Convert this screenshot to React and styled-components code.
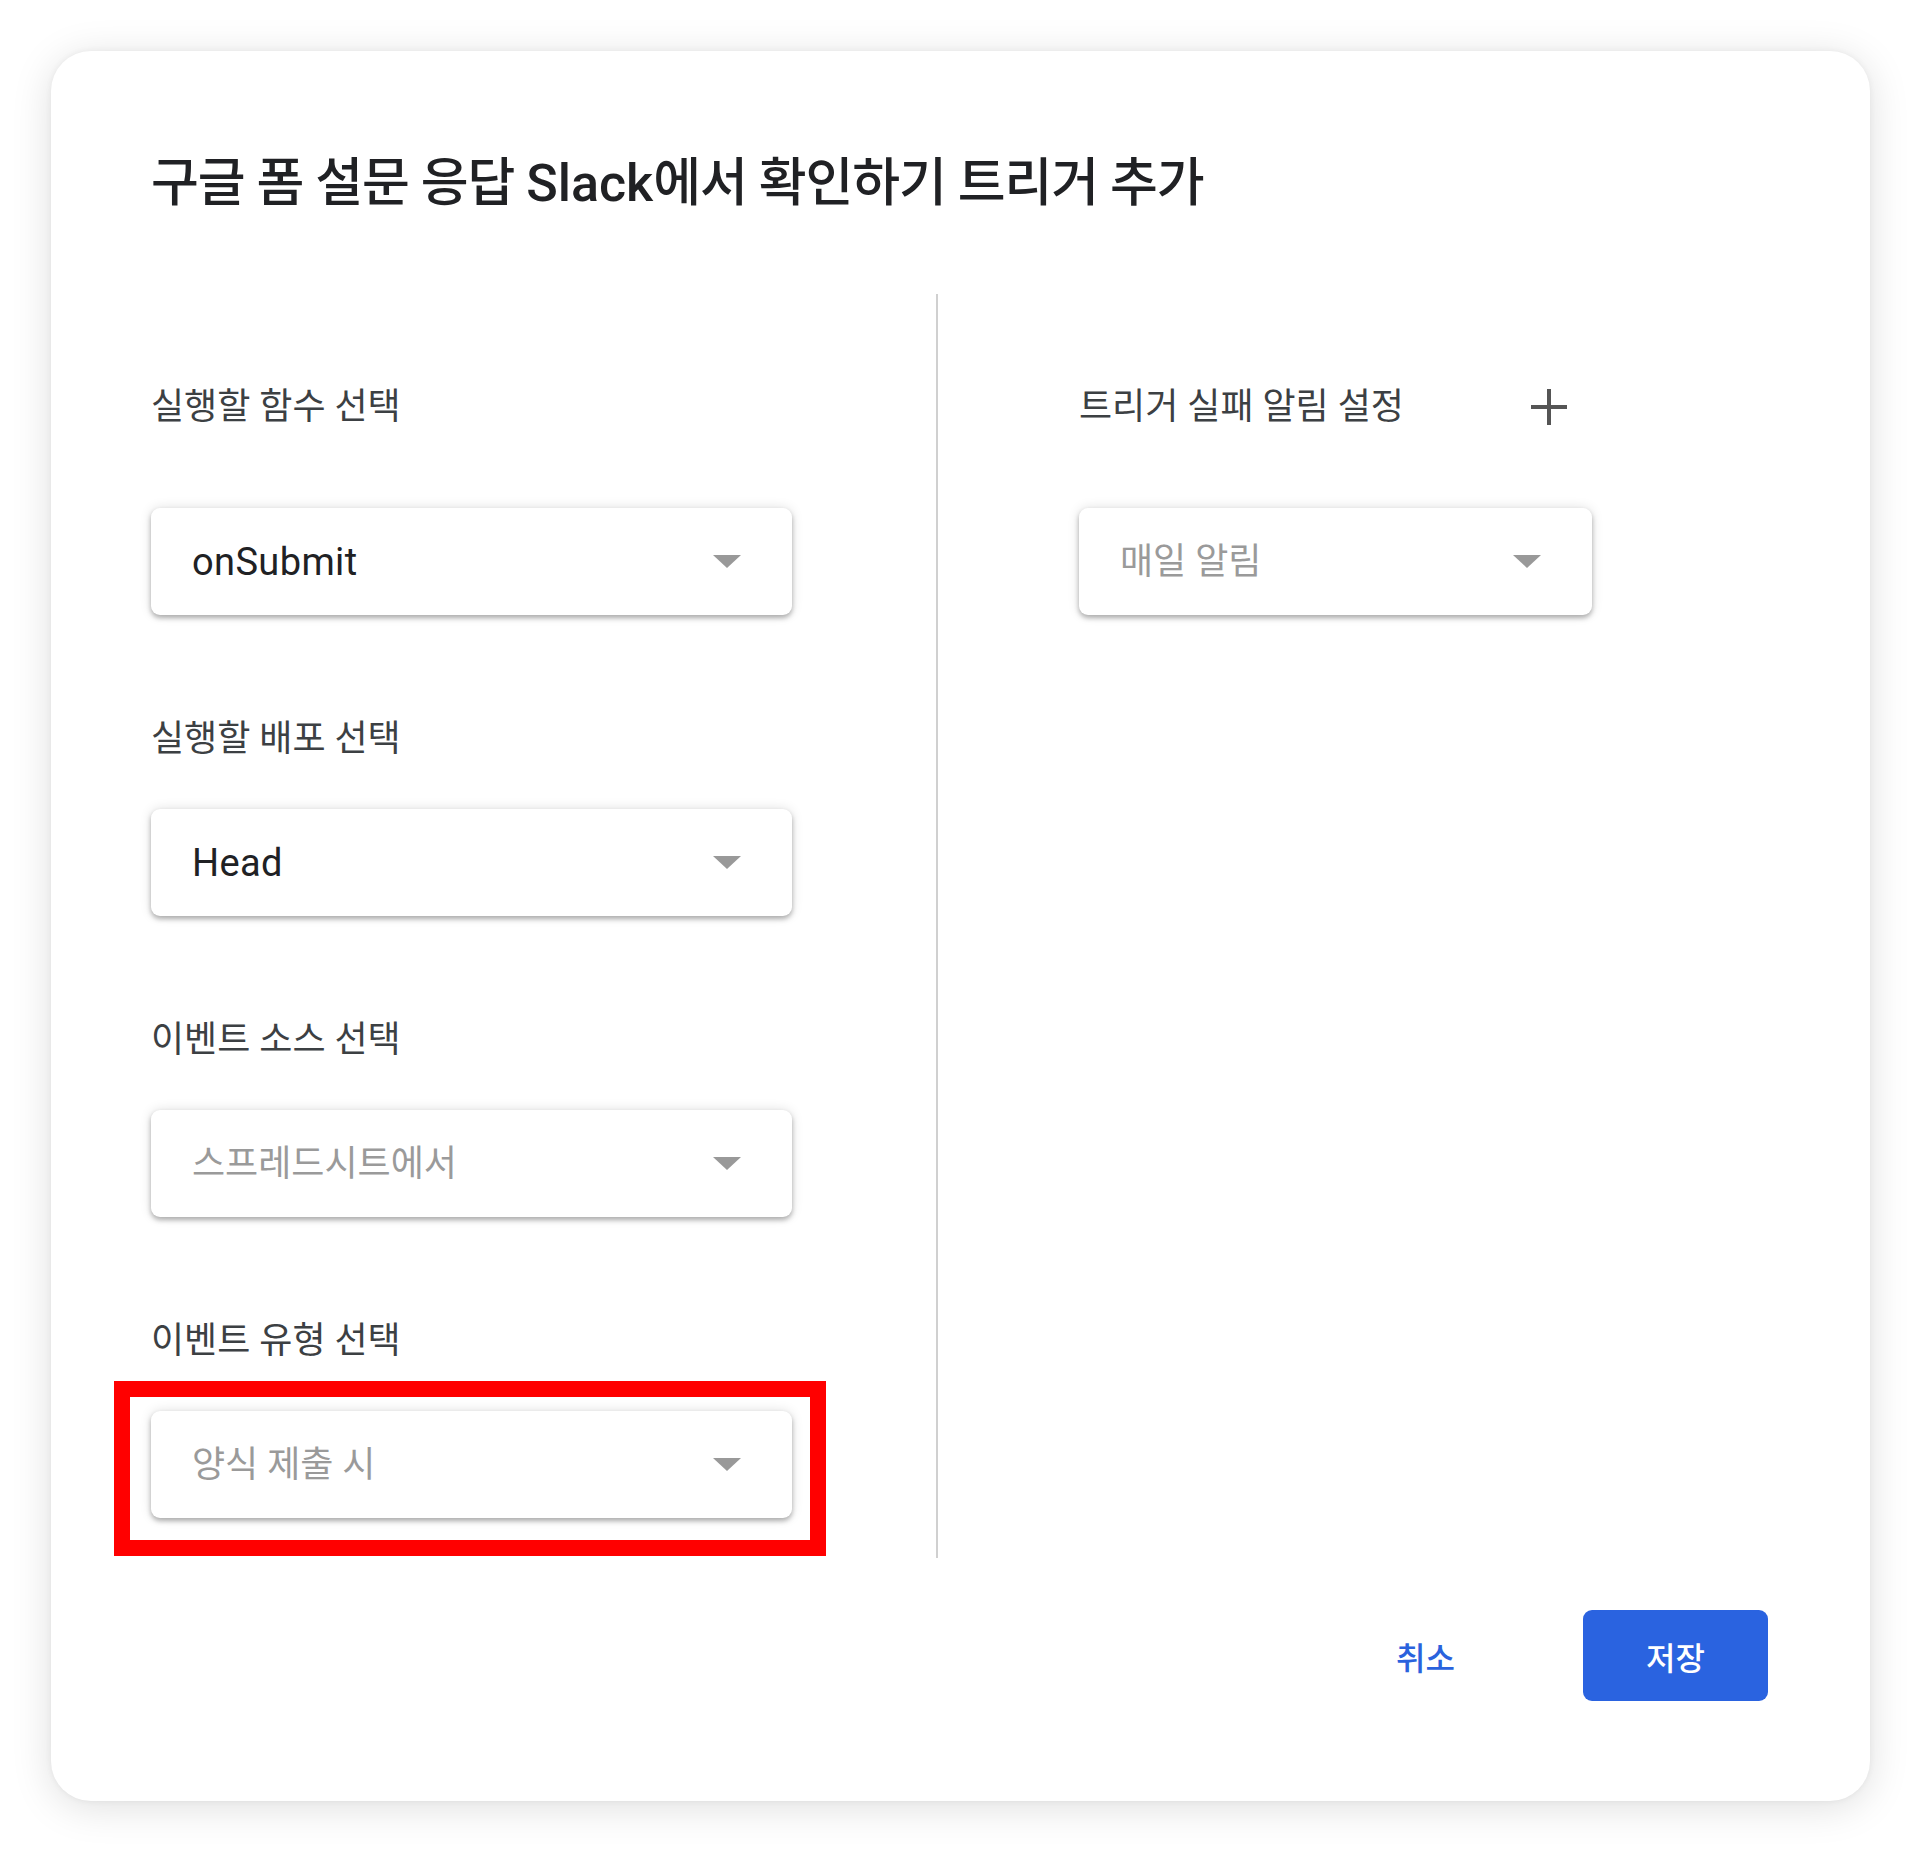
import React from "react";
import styled, { createGlobalStyle } from "styled-components";

const Global = createGlobalStyle`
  html, body { margin: 0; padding: 0; background: #ffffff; }
  body { font-family: Roboto, "Noto Sans CJK KR", sans-serif; }
  * { box-sizing: border-box; }
`;

const Page = styled.div`
  width: 1920px;
  min-height: 1854px;
  padding: 51px 50px 52px 51px;
  background: #ffffff;
`;

const Card = styled.div`
  width: 1819px;
  background: #ffffff;
  border-radius: 40px;
  box-shadow: 0 6px 40px rgba(0, 0, 0, 0.13), 0 0 6px rgba(0, 0, 0, 0.06);
  padding: 101px 102px 100px 100px;
  display: flex;
  flex-direction: column;
`;

const Title = styled.h1`
  margin: 0;
  font-size: 52px;
  line-height: 64px;
  font-weight: 500;
  color: #202124;
  letter-spacing: -0.02em;
  white-space: nowrap;
`;

const Latin = styled.span`
  letter-spacing: 0;
`;

const Body = styled.div`
  margin-top: 78px;
  display: flex;
  align-items: stretch;
`;

const Column = styled.div`
  display: flex;
  flex-direction: column;
  width: ${(p) => p.$width}px;
  padding: 84px 0 40px;
`;

const Divider = styled.div`
  width: 2px;
  background: #d0d0d0;
  margin: 0 141px 0 143px;
`;

const Field = styled.div`
  display: flex;
  flex-direction: column;
  margin-top: ${(p) => (p.$first ? 0 : 95)}px;
`;

const FieldHead = styled.div`
  display: flex;
  align-items: center;
  gap: 127px;
  height: 48px;
  margin-bottom: ${(p) => (p.$first ? 82 : 51)}px;
`;

const Label = styled.div`
  font-size: 36px;
  line-height: 48px;
  padding-top: 9px;
  color: #3c4043;
  letter-spacing: 0;
  white-space: nowrap;
`;

const AddButton = styled.button`
  border: 0;
  background: transparent;
  padding: 0;
  width: 36px;
  height: 36px;
  margin-top: 10px;
  display: flex;
  align-items: center;
  justify-content: center;
  cursor: pointer;
`;

const Highlight = styled.div`
  position: relative;
`;

const RedFrame = styled.div`
  position: absolute;
  left: -37px;
  right: -33px;
  top: -30px;
  bottom: -38px;
  border: 16px solid #ff0000;
  pointer-events: none;
`;

const Select = styled.div`
  height: 107px;
  width: ${(p) => p.$width}px;
  border-radius: 9px;
  background: #ffffff;
  box-shadow: 0 3px 5px rgba(0, 0, 0, 0.28), 0 0 12px rgba(0, 0, 0, 0.13);
  display: flex;
  align-items: center;
  justify-content: space-between;
  padding: 0 51px 0 41px;
`;

const SelectValue = styled.span`
  font-size: ${(p) => (p.$latin ? 38 : 36)}px;
  line-height: 48px;
  color: ${(p) => (p.$placeholder ? "#9a9a9a" : "#202124")};
  letter-spacing: ${(p) => (p.$latin ? "0.01em" : "0")};
  white-space: nowrap;
`;

const Caret = styled.span`
  width: 0;
  height: 0;
  border-left: 14.5px solid transparent;
  border-right: 14.5px solid transparent;
  border-top: 13px solid #999999;
`;

const Footer = styled.div`
  margin-top: 52px;
  display: flex;
  justify-content: flex-end;
  align-items: center;
  gap: 104px;
`;

const TextButton = styled.button`
  border: 0;
  background: transparent;
  height: 91px;
  padding: 0 24px;
  font-family: Roboto, "Noto Sans CJK KR", sans-serif;
  font-size: 32px;
  font-weight: 500;
  color: #2a62dd;
  letter-spacing: 0;
  cursor: pointer;
`;

const PrimaryButton = styled.button`
  border: 0;
  width: 185px;
  height: 91px;
  border-radius: 9px;
  background: #2a63e0;
  color: #ffffff;
  font-family: Roboto, "Noto Sans CJK KR", sans-serif;
  font-size: 32px;
  font-weight: 500;
  letter-spacing: 0;
  cursor: pointer;
`;

function PlusIcon() {
  return (
    <svg width="36" height="36" viewBox="0 0 36 36">
      <rect x="16" y="0" width="4" height="36" fill="#555555" />
      <rect x="0" y="16" width="36" height="4" fill="#555555" />
    </svg>
  );
}

function Dropdown({ value, placeholder, latin, width = 641 }) {
  return (
    <Select $width={width}>
      <SelectValue $placeholder={placeholder} $latin={latin}>
        {value}
      </SelectValue>
      <Caret />
    </Select>
  );
}

export default function App() {
  return (
    <>
      <Global />
      <Page>
        <Card>
          <Title>
            구글 폼 설문 응답 <Latin>Slack</Latin>에서 확인하기 트리거 추가
          </Title>
          <Body>
            <Column $width={642}>
              <Field $first>
                <FieldHead $first>
                  <Label>실행할 함수 선택</Label>
                </FieldHead>
                <Dropdown value="onSubmit" latin />
              </Field>
              <Field>
                <FieldHead>
                  <Label>실행할 배포 선택</Label>
                </FieldHead>
                <Dropdown value="Head" latin />
              </Field>
              <Field>
                <FieldHead>
                  <Label>이벤트 소스 선택</Label>
                </FieldHead>
                <Dropdown value="스프레드시트에서" placeholder />
              </Field>
              <Field>
                <FieldHead>
                  <Label>이벤트 유형 선택</Label>
                </FieldHead>
                <Highlight>
                  <Dropdown value="양식 제출 시" placeholder />
                  <RedFrame />
                </Highlight>
              </Field>
            </Column>
            <Divider />
            <Column $width={520}>
              <Field $first>
                <FieldHead $first>
                  <Label>트리거 실패 알림 설정</Label>
                  <AddButton aria-label="추가">
                    <PlusIcon />
                  </AddButton>
                </FieldHead>
                <Dropdown value="매일 알림" placeholder width={513} />
              </Field>
            </Column>
          </Body>
          <Footer>
            <TextButton>취소</TextButton>
            <PrimaryButton>저장</PrimaryButton>
          </Footer>
        </Card>
      </Page>
    </>
  );
}
